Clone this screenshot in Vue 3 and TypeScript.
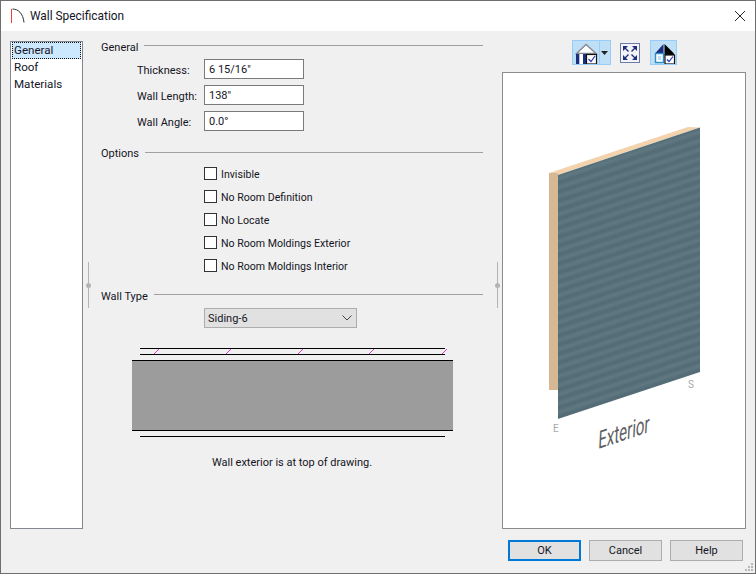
<script setup lang="ts">
const tabs: string[] = ['General', 'Roof', 'Materials']

const fields = [
  { label: 'Thickness:', value: '6 15/16"' },
  { label: 'Wall Length:', value: '138"' },
  { label: 'Wall Angle:', value: '0.0°' },
]

const options: string[] = [
  'Invisible',
  'No Room Definition',
  'No Locate',
  'No Room Moldings Exterior',
  'No Room Moldings Interior',
]

// little purple ticks on the siding layer
const ticks: number[] = [154, 226, 298, 369, 442]

const buttons: string[] = ['OK', 'Cancel', 'Help']
</script>

<template>
  <div class="window">
    <div class="titlebar">
      <svg class="app-icon" width="16" height="16" viewBox="0 0 16 16">
        <path d="M2.500 1 C8 1 13 5 14 14.500" fill="none" stroke="#333" stroke-width="1" />
        <path d="M1.500 1V15" stroke="#e8414a" stroke-width="1" />
      </svg>
      <span class="title">Wall Specification</span>
      <svg class="close" width="10" height="10" viewBox="0 0 10 10">
        <path d="M0 0L10 10M10 0L0 10" stroke="#222" stroke-width="1" />
      </svg>
    </div>

    <div class="main">
      <ul class="tabs">
        <li v-for="(tab, i) in tabs" :key="tab" :class="{ active: i === 0 }">{{ tab }}</li>
      </ul>

      <div class="center">
        <div class="legend"><span>General</span><i></i></div>
        <div class="fields">
          <template v-for="f in fields" :key="f.label">
            <label>{{ f.label }}</label>
            <input type="text" :value="f.value" />
          </template>
        </div>

        <div class="legend options-legend"><span>Options</span><i></i></div>
        <div class="options">
          <label v-for="o in options" :key="o" class="option">
            <input type="checkbox" />
            <span>{{ o }}</span>
          </label>
        </div>

        <div class="legend type-legend"><span>Wall Type</span><i></i></div>
        <div class="select">
          <span>Siding-6</span>
          <svg width="10" height="6" viewBox="0 0 10 6">
            <path d="M0.500 0.500L5 5L9.500 0.500" fill="none" stroke="#444" stroke-width="1" />
          </svg>
        </div>

        <svg class="section" width="321" height="91" viewBox="132 347 321 91">
          <rect x="132" y="360" width="321" height="70" fill="#9c9c9c" />
          <path d="M140 348.500H445M140 354.500H445M132 360.500H453M132 430.500H453M140 436.500H445" stroke="#000" stroke-width="1.100" fill="none" />
          <path
            v-for="t in ticks"
            :key="t"
            :d="`M${t} 354L${t + 5} 349`"
            stroke="#d63bd6"
            stroke-width="1"
          />
        </svg>

        <p class="caption">Wall exterior is at top of drawing.</p>
      </div>

      <div class="preview-col">
        <div class="toolbar">
          <div class="tool-split">
            <button class="tool house">
              <svg width="26" height="23" viewBox="0 0 26 23">
                <path d="M13 3.500L3.500 12.500H23Z" fill="#fff" stroke="#85888f" stroke-width="1.400" />
                <rect x="3" y="13" width="3.500" height="10" fill="#1c2f7c" />
                <rect x="6.500" y="13" width="3.500" height="10" fill="#fff" />
                <rect x="10" y="13" width="3.500" height="10" fill="#1c2f7c" />
                <rect x="13.500" y="13.500" width="10" height="9.500" fill="#fff" stroke="#111" stroke-width="1.200" />
                <path d="M15.500 18L18 20.500L22 15" fill="none" stroke="#2a34b8" stroke-width="1.200" />
              </svg>
            </button>
            <button class="tool caret">
              <svg width="7" height="4" viewBox="0 0 7 4"><path d="M0 0H7L3.500 4Z" fill="#222" /></svg>
            </button>
          </div>

          <svg class="fit" width="20" height="20" viewBox="0 0 20 20">
            <rect x="0.500" y="0.500" width="19" height="19" fill="#f4f4f8" stroke="#6c7aa8" />
            <path d="M3 3H8L3 8ZM17 3V8L12 3ZM3 17V12L8 17ZM17 17H12L17 12Z" fill="#1c2f7c" />
            <path d="M4 4L8.500 8.500M16 4L11.500 8.500M4 16L8.500 11.500M16 16L11.500 11.500" stroke="#1c2f7c" stroke-width="1.400" />
          </svg>

          <button class="tool shade">
            <svg width="25" height="23" viewBox="0 0 25 23">
              <path d="M12.500 3L4 12.500H12.500Z" fill="#1c2f7c" />
              <path d="M13.500 3L23 12.500V14H13.500Z" fill="#000" />
              <rect x="4.500" y="12.500" width="8" height="9" fill="#fff" stroke="#2a8fc4" stroke-width="1.400" />
              <rect x="7" y="15" width="3" height="4" fill="#bfdff7" />
              <rect x="14" y="14" width="9.500" height="9" fill="#fff" stroke="#111" stroke-width="1.200" />
              <path d="M16 18.500L18 20.500L22 15.500" fill="none" stroke="#2a34b8" stroke-width="1.200" />
            </svg>
          </button>
        </div>

        <div class="preview">
          <svg width="242" height="455" viewBox="503 73 242 455">
            <defs>
              <linearGradient id="band" x1="0" y1="0" x2="0" y2="1">
                <stop offset="0" stop-color="#516a73" />
                <stop offset="0.5" stop-color="#5f7881" />
                <stop offset="1" stop-color="#516a73" />
              </linearGradient>
              <pattern id="siding" width="160" height="9" patternUnits="userSpaceOnUse" patternTransform="translate(558 174) skewY(-18.200)">
                <rect width="160" height="9" fill="url(#band)" />
              </pattern>
            </defs>
            <path d="M549 173L688 127L700 127.500L558 175Z" fill="#f2d3ae" />
            <path d="M549 173H558V390H549Z" fill="#d6b994" />
            <path d="M558 175L700 127.500V372L558 419Z" fill="url(#siding)" />
            <text class="compass" x="553" y="432">E</text>
            <text class="compass" x="688" y="388">S</text>
            <text class="exterior" transform="matrix(0.6 -0.2 -0.05 1 598 449)">Exterior</text>
          </svg>
        </div>
      </div>
    </div>

    <div class="footer">
      <button v-for="(b, i) in buttons" :key="b" class="btn" :class="{ primary: i === 0 }">{{ b }}</button>
    </div>

    <span class="splitter left"></span>
    <span class="splitter right"></span>

    <svg class="grip" width="10" height="10" viewBox="0 0 10 10">
      <path d="M7 1h2v2H7zM4 4h2v2H4zM7 4h2v2H7zM1 7h2v2H1zM4 7h2v2H4zM7 7h2v2H7z" fill="#b8b8b8" />
    </svg>
  </div>
</template>

<style scoped>
.window {
  position: relative;
  width: 756px;
  height: 574px;
  box-sizing: border-box;
  border: 1px solid #6e6e6e;
  background: #f0f0f0;
  display: flex;
  flex-direction: column;
  font-family: Roboto, "Open Sans", sans-serif;
  font-size: 11px;
  color: #15151f;
  overflow: hidden;
}

.titlebar {
  height: 30px;
  flex: none;
  background: #fff;
  display: flex;
  align-items: center;
  padding: 0 10px 0 9px;
}

.app-icon {
  margin-right: 4px;
}

.title {
  font-size: 11.900px;
  flex: 1;
}

.main {
  flex: 1;
  display: flex;
  padding: 7px 9px 0;
  min-height: 0;
}

.tabs {
  list-style: none;
  margin: 3px 0 0;
  padding: 0;
  width: 73px;
  height: 488px;
  box-sizing: border-box;
  background: #fff;
  border: 1px solid #828790;
  font-size: 11.600px;
}

.tabs li {
  height: 17px;
  line-height: 15px;
  padding-left: 2px;
  box-sizing: border-box;
  border: 1px solid transparent;
  margin: 0;
}

.tabs li.active {
  background: #cce8ff;
  border: 1px dotted #111;
  padding-left: 1px;
  margin: 0 1px;
}

.center {
  width: 382px;
  margin-left: 18px;
}

.legend {
  display: flex;
  align-items: center;
  height: 16px;
}

.legend:not(.options-legend) span {
  padding-top: 2px;
}

.legend i {
  flex: 1;
  height: 1px;
  background: #a0a0a0;
  margin: -2px 0 0 6px;
}

.fields {
  display: grid;
  grid-template-columns: 67px 100px;
  grid-auto-rows: 20px;
  row-gap: 6px;
  margin: 5px 0 0 36px;
  align-items: center;
}

.fields label {
  padding-top: 2px;
}

.fields input {
  width: 100px;
  height: 20px;
  box-sizing: border-box;
  border: 1px solid #7a7a7a;
  background: #fff;
  padding: 1px 4px 0;
  font: inherit;
  color: inherit;
  outline: none;
}

.options-legend {
  margin-top: 14px;
}

.options {
  margin: 1px 0 0 103px;
  font-size: 10.600px;
}

.option {
  display: flex;
  align-items: center;
  gap: 4px;
  height: 23px;
}

.option span {
  padding-top: 2px;
}

.option input {
  appearance: none;
  width: 13px;
  height: 13px;
  margin: 0;
  box-sizing: border-box;
  border: 1px solid #333;
  background: #fff;
}

.type-legend {
  margin-top: 10px;
}

.select {
  margin: 5px 0 0 103px;
  width: 153px;
  height: 20px;
  box-sizing: border-box;
  border: 1px solid #adadad;
  background: #e1e1e1;
  display: flex;
  align-items: center;
  justify-content: space-between;
  padding: 0 4px 0 3px;
}

.section {
  display: block;
  margin: 19px 0 0 31px;
}

.caption {
  margin: 16px 0 0;
  text-align: center;
  line-height: 18px;
}

.preview-col {
  width: 244px;
  margin-left: 19px;
  display: flex;
  flex-direction: column;
}

.toolbar {
  height: 34px;
  flex: none;
  box-sizing: border-box;
  padding-top: 2px;
  display: flex;
  justify-content: center;
  align-items: flex-start;
}

.tool-split {
  display: flex;
  height: 25px;
  box-sizing: border-box;
  border: 1px solid #99ccf7;
  background: #bfdff7;
}

.tool {
  border: 0;
  padding: 0;
  background: none;
  display: flex;
  align-items: center;
  justify-content: center;
}

.tool.house {
  width: 26px;
}

.tool.caret {
  width: 11px;
  border-left: 1px solid #99ccf7;
}

.fit {
  margin: 3px 10px 0 9px;
}

.tool.shade {
  width: 27px;
  height: 25px;
  box-sizing: border-box;
  border: 1px solid #99ccf7;
  background: #bfdff7;
}

.preview {
  height: 457px;
  box-sizing: border-box;
  border: 1px solid #8c8c8c;
  background: #fff;
}

.preview svg {
  display: block;
}

.compass {
  font-size: 10px;
  fill: #a8a8a8;
}

.exterior {
  font-size: 25px;
  fill: #5e5e62;
}

.footer {
  flex: none;
  height: 43px;
  box-sizing: border-box;
  padding: 10px 12px 0 0;
  display: flex;
  justify-content: flex-end;
  align-items: flex-start;
  gap: 8px;
}

.btn {
  width: 73px;
  height: 21px;
  box-sizing: border-box;
  border: 1px solid #adadad;
  background: #e1e1e1;
  font: inherit;
  color: inherit;
  padding: 0;
}

.btn.primary {
  border: 2px solid #0078d7;
}

.splitter {
  position: absolute;
  top: 261px;
  width: 1px;
  height: 46px;
  background: #b4b4b4;
}

.splitter::after {
  content: "";
  position: absolute;
  left: -2px;
  top: 21px;
  width: 5px;
  height: 5px;
  border-radius: 50%;
  background: #b4b4b4;
}

.splitter.left {
  left: 87px;
}

.splitter.right {
  left: 496px;
}

.grip {
  position: absolute;
  right: 1px;
  bottom: 1px;
}
</style>
